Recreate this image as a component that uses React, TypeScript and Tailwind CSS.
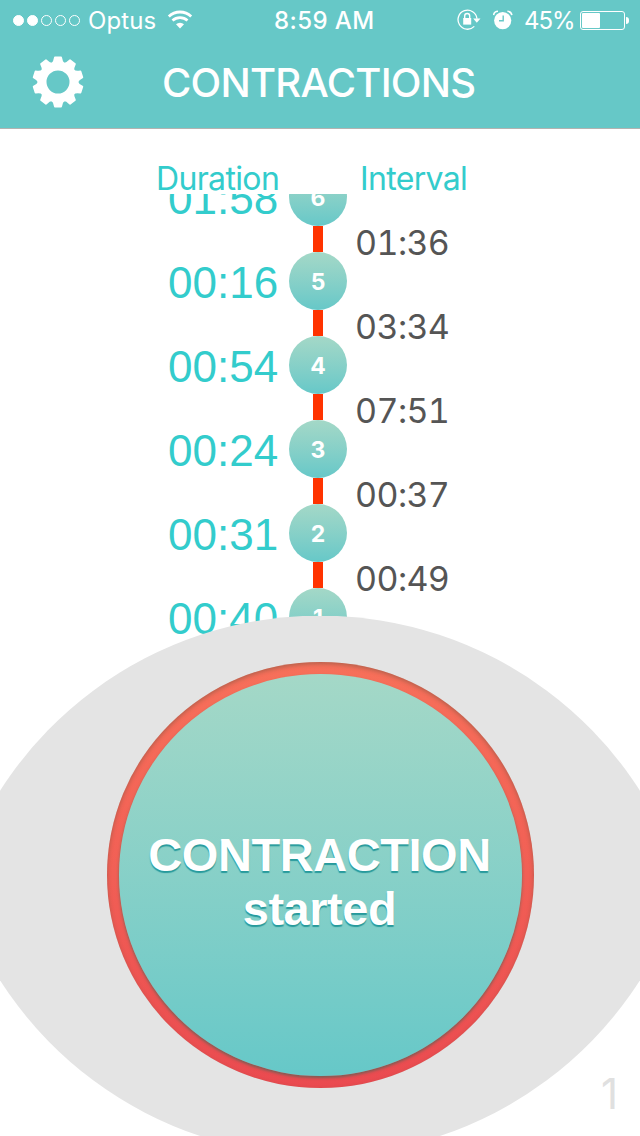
import { clsx } from "clsx"

const contractions = [
  { id: 6, duration: "01:58", interval: "01:36" },
  { id: 5, duration: "00:16", interval: "03:34" },
  { id: 4, duration: "00:54", interval: "07:51" },
  { id: 3, duration: "00:24", interval: "00:37" },
  { id: 2, duration: "00:31", interval: "00:49" },
  { id: 1, duration: "00:40", interval: null },
]

const teeth = [0, 36, 72, 108, 144, 180, 216, 252, 288, 324]

const GearIcon = () => (
  <svg width="52" height="52" viewBox="-26 -26 52 52" fill="white">
    <circle r="16" fill="none" stroke="white" strokeWidth="9" />
    {teeth.map((angle) => (
      <path key={angle} d="M-6.6 -18.5 Q-4.6 -20.5 -4 -24.6 Q-3.9 -25.5 -3 -25.5 H3 Q3.9 -25.5 4 -24.6 Q4.6 -20.5 6.6 -18.5Z" transform={`rotate(${angle})`} />
    ))}
  </svg>
)

const WifiIcon = () => (
  <svg width="26" height="20" viewBox="0 0 26 20" fill="none" stroke="white">
    <path d="M1.8 6.4 A16.4 16.4 0 0 1 24.2 6.4" strokeWidth="2.8" />
    <path d="M5.5 10.6 A11 11 0 0 1 20.5 10.6" strokeWidth="2.7" />
    <path d="M9 14.3 A5.7 5.7 0 0 1 17 14.3 L13 18.5Z" fill="white" stroke="none" />
  </svg>
)

const LockIcon = () => (
  <svg width="24" height="22" viewBox="0 0 24 22" fill="none" stroke="white">
    <path d="M20 9.8 A9.5 9.5 0 1 0 17.3 17.4" strokeWidth="1.3" />
    <path d="M16.2 9.6 H23.5 L19.8 13.7Z" fill="white" stroke="none" />
    <rect x="6.2" y="9" width="8" height="6.6" fill="white" stroke="none" />
    <path d="M7.7 9.3 V7 A2.5 2.5 0 0 1 12.7 7 V9.3" strokeWidth="1.4" />
  </svg>
)

const AlarmIcon = () => (
  <svg width="20" height="20" viewBox="0 0 20 20">
    <circle cx="9.7" cy="10.6" r="8.6" fill="white" />
    <path d="M10.2 5.4 V10.8 H6" fill="none" stroke="#66c8c7" strokeWidth="1.4" />
    <path d="M.6 5.1 Q1.2 1.4 5 1.3 M14.4 1.3 Q18.2 1.4 18.9 5.1" fill="none" stroke="white" strokeWidth="1.6" />
  </svg>
)

const StatusBar = () => (
  <div className="flex h-10 items-center pl-[13px] pr-[10px] text-[24px] leading-none">
    <div className="flex w-[261px] items-center">
      <div className="flex gap-[3px]">
        {[true, true, false, false, false].map((filled, i) => (
          <div key={i} className={clsx("size-[11px] rounded-full border border-white", filled && "bg-white")} />
        ))}
      </div>
      <span className="ml-[8px] w-[72px] pt-[2px] tracking-[0.1px]">Optus</span>
      <div className="ml-[7px]">
        <WifiIcon />
      </div>
    </div>
    <span className="w-[183px] whitespace-nowrap pt-[2px] font-medium tracking-[0.4px]">8:59 AM</span>
    <LockIcon />
    <div className="ml-[12px]">
      <AlarmIcon />
    </div>
    <span className="ml-[11px] w-[56px] whitespace-nowrap pt-[2px] tracking-[-1.1px]">45%</span>
    <div className="flex shrink-0 items-center">
      <div className="h-[19px] w-[45px] rounded-[3px] border border-white p-[1px]">
        <div className="h-full w-[18px] rounded-[1px] bg-white" />
      </div>
      <div className="ml-[1px] h-[7px] w-[3px] rounded-r-full bg-white" />
    </div>
  </div>
)

const App = () => {
  return (
    <div className="flex h-[1136px] w-[640px] flex-col overflow-hidden bg-white font-['Inter',sans-serif]">
      <header className="h-[129px] shrink-0 border-b border-[#b3b3b1] bg-[#66c8c7] text-white">
        <StatusBar />
        <div className="flex h-[84px] items-center pl-8">
          <button>
            <GearIcon />
          </button>
          <h1 className="ml-[78px] pt-px text-[40px] font-medium leading-none tracking-[-0.75px]">CONTRACTIONS</h1>
        </div>
      </header>

      {/* Column labels */}
      <div className="flex h-[65px] shrink-0 items-start pl-[156px] pt-[34px] text-[32px] leading-[32px] tracking-[-0.65px] text-[#33cccc]">
        <span className="w-[204px]">Duration</span>
        <span>Interval</span>
      </div>

      {/* Timeline */}
      <div className="h-[466px] shrink-0 overflow-hidden">
        <div className="-mt-[26px]">
          {contractions.map((item) => (
            <div key={item.id} className="flex h-[84px] pl-[168px]">
              <div className="w-[121px] pt-[9px] font-['Liberation_Sans',sans-serif] text-[44px] leading-[44px] text-[#33cccc]">
                {item.duration}
              </div>
              <div className="flex w-[58px] flex-col items-center">
                <div className="flex size-[58px] shrink-0 items-center justify-center rounded-full bg-linear-to-b from-[#a4d8c7] to-[#66c8c8] pt-[2px] text-[23px] font-bold text-white">
                  {item.id}
                </div>
                {item.interval && <div className="h-[26px] w-[10px] bg-[#ff3300]" />}
              </div>
              <div className="ml-[8px] mt-[58px] text-[34px] leading-[34px] tracking-[-0.6px] tabular-nums text-[#555555]">{item.interval}</div>
            </div>
          ))}
        </div>
      </div>

      {/* Start / stop button */}
      <div className="relative -mt-[44px] h-[520px] shrink-0">
        <svg className="absolute left-0 top-0" width="640" height="520" viewBox="0 0 640 520">
          <path d="M-43.7 269.5 A380 380 0 0 1 683.7 269.5 A380 380 0 0 1 -43.7 269.5Z" fill="#e4e4e4" />
        </svg>
        <div className="relative flex justify-center pl-px pt-[46px]">
          <button className="h-[426px] w-[427px] rounded-full bg-linear-to-b from-[#f7705a] via-[#f15f55] to-[#ea4a50] p-[12px] shadow-[inset_0_2px_4px_rgba(100,80,60,0.45)]">
            <div className="flex h-full flex-col items-center justify-center rounded-full bg-linear-to-b from-[#a4d8c7] to-[#66c8c8] pr-[2px] pt-[13px] font-['Liberation_Sans',sans-serif] text-[47px] font-bold leading-[54px] tracking-[-0.45px] text-white shadow-[0_2px_3px_rgba(80,100,85,0.7)] [text-shadow:0_2px_1px_#279a9c]">
              <span>CONTRACTION</span>
              <span>started</span>
            </div>
          </button>
        </div>
        <span className="absolute bottom-[21px] right-[22px] text-[42px] leading-[42px] text-[#e0e0e0]">1</span>
      </div>
    </div>
  )
}

export default App
